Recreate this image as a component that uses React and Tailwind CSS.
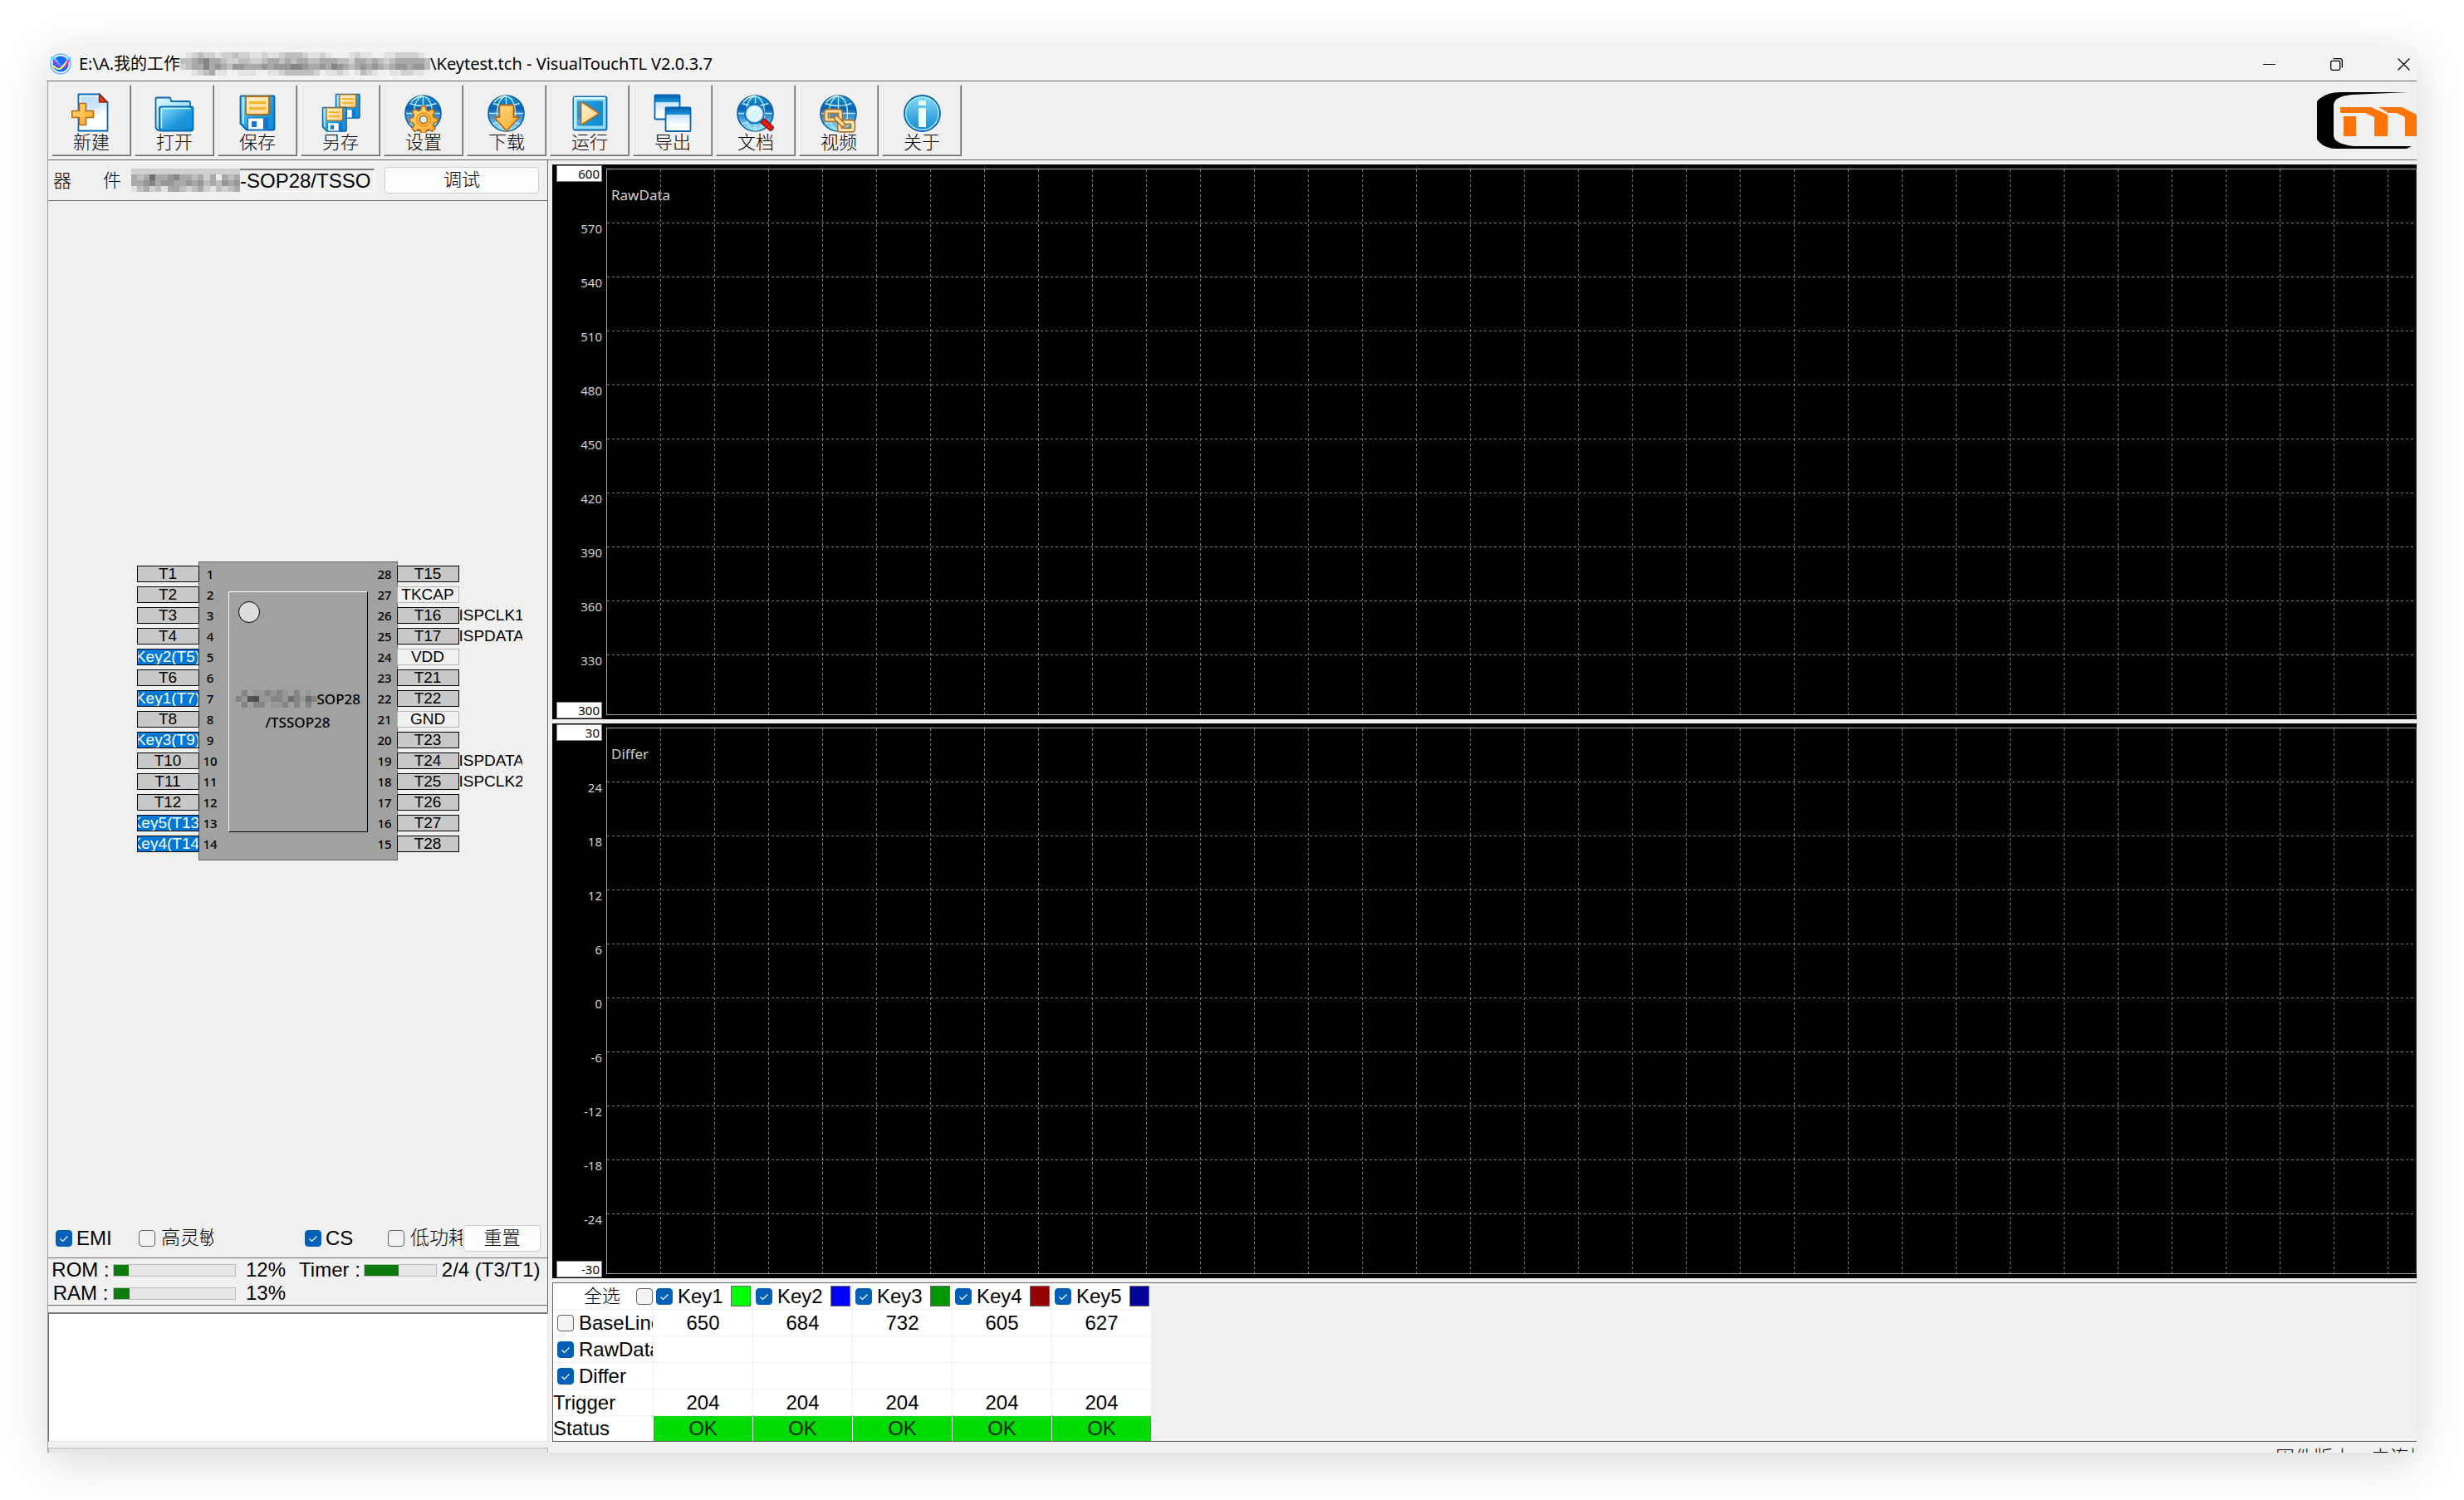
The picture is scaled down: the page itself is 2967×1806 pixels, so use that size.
import React, { useState } from 'react';
import clsx from 'clsx';

const UI_FONT = "font-['Liberation_Sans','Noto_Sans_CJK_SC',sans-serif]";

const SHADES = {
    0: 'bg-[#f0f0f0]',
    1: 'bg-[#e2e2e2]',
    2: 'bg-[#d0d0d0]',
    3: 'bg-[#bebebe]',
    4: 'bg-[#a9a9a9]',
    5: 'bg-[#979797]',
    6: 'bg-[#858585]',
    7: 'bg-[#6e6e6e]',
    8: 'bg-[#505050]',
    9: 'bg-[#a1a1a1]',
};

const PATH_MASK = [
    '0123221223221121123332112100012110011222210',
    '3345644322332234434344334443324434323444443',
    '2344645435544454555665445465434545434554553',
    '0012341100111001123333320112101321001122110',
];
const DEVICE_MASK = [
    '222222222222222222',
    '434744564434240434',
    '445645544545343545',
    '134231443234213234',
];
const CHIP_MASK = ['96955656596959', '65885566576576', '96966955696969'];

const leftPins = ['T1', 'T2', 'T3', 'T4', 'Key2(T5)', 'T6', 'Key1(T7)', 'T8', 'Key3(T9)', 'T10', 'T11', 'T12', 'Key5(T13)', 'Key4(T14)'];
const rightPins = ['T15', 'TKCAP', 'T16', 'T17', 'VDD', 'T21', 'T22', 'GND', 'T23', 'T24', 'T25', 'T26', 'T27', 'T28'];
const ispLabels = ['', '', 'ISPCLK1', 'ISPDATA1', '', '', '', '', '', 'ISPDATA2', 'ISPCLK2', '', '', ''];
const powerPins = ['TKCAP', 'VDD', 'GND'];

const keys = [
    { name: 'Key1', color: 'bg-[#00ff00]', base: 650, trigger: 204 },
    { name: 'Key2', color: 'bg-[#0000ff]', base: 684, trigger: 204 },
    { name: 'Key3', color: 'bg-[#009600]', base: 732, trigger: 204 },
    { name: 'Key4', color: 'bg-[#960000]', base: 605, trigger: 204 },
    { name: 'Key5', color: 'bg-[#000096]', base: 627, trigger: 204 },
];

const Mask = ({ rows, className }) => (
    <div className={clsx('shrink-0', className)} aria-hidden="true">
        {rows.map((row, i) => (
            <div key={i} className="flex">
                {row.split('').map((s, j) => <span key={j} className={clsx('h-[7px] flex-1', SHADES[s])} />)}
            </div>
        ))}
    </div>
);

/* ---------- toolbar icons ---------- */

const IconDefs = () => (
    <svg className="absolute w-0 h-0" aria-hidden="true">
        <defs>
            <linearGradient id="paper" x1="0" y1="0" x2="0.3" y2="1">
                <stop offset="0" stopColor="#b4dcff" /><stop offset="0.45" stopColor="#cfe7ff" /><stop offset="0.75" stopColor="#fff" />
            </linearGradient>
            <linearGradient id="blue" x1="0" y1="0" x2="1" y2="1">
                <stop offset="0" stopColor="#8be0ff" /><stop offset="0.6" stopColor="#1d97da" /><stop offset="1" stopColor="#0e8ad2" />
            </linearGradient>
            <linearGradient id="blueBack" x1="0" y1="0" x2="1" y2="1">
                <stop offset="0" stopColor="#e0fbff" /><stop offset="1" stopColor="#6cc8f0" />
            </linearGradient>
            <linearGradient id="gold" x1="0" y1="0" x2="1" y2="1">
                <stop offset="0" stopColor="#ffe08e" /><stop offset="1" stopColor="#ffa41c" />
            </linearGradient>
            <linearGradient id="cream" x1="0" y1="0" x2="1" y2="1">
                <stop offset="0" stopColor="#fff2cf" /><stop offset="1" stopColor="#ffd48a" />
            </linearGradient>
            <linearGradient id="globe" x1="0" y1="0" x2="0" y2="1">
                <stop offset="0" stopColor="#1f9ade" /><stop offset="0.35" stopColor="#0a62b0" /><stop offset="0.6" stopColor="#3f94d2" /><stop offset="1" stopColor="#a5ecff" />
            </linearGradient>
            <linearGradient id="info" x1="0" y1="0" x2="0" y2="1">
                <stop offset="0" stopColor="#86dcfa" /><stop offset="1" stopColor="#0e88d0" />
            </linearGradient>
            <linearGradient id="win" x1="0" y1="0" x2="0" y2="1">
                <stop offset="0" stopColor="#0562ae" /><stop offset="0.3" stopColor="#1b93d8" /><stop offset="0.31" stopColor="#c4e2fc" /><stop offset="0.75" stopColor="#fff" />
            </linearGradient>
        </defs>
    </svg>
);

const Globe = () => (
    <g>
        <circle cx="23.5" cy="24.5" r="21.5" fill="url(#globe)" stroke="#0460ad" strokeWidth="1.6" />
        <g fill="none" stroke="#b5ecff" strokeWidth="1.4">
            <ellipse cx="23.5" cy="24.5" rx="11" ry="20.5" />
            <path d="M23.5 4v41M3 24.500h41M7.500 12.500q16 6 32 0M7.500 37q16 -6 32 0" />
        </g>
        <path d="M9 11q6-7 14-7.500" fill="none" stroke="#e8fbff" strokeWidth="1.4" />
    </g>
);

const Floppy = () => (
    <g>
        <path d="M5 3.500h38q1.500 0 1.500 1.500v38q0 1.500-1.500 1.500H11L3.500 37V5q0-1.500 1.500-1.500z" fill="url(#blue)" stroke="#0562ae" strokeWidth="1.8" />
        <path d="M5.800 6v30l2 2V6z" fill="#a8ecff" />
        <path d="M10 4h28v19q0 3-3 3H13q-3 0-3-3z" fill="url(#cream)" stroke="#b06a18" strokeWidth="1.8" />
        <path d="M14 11.500h20M14 18.500h20" stroke="#ffb22e" strokeWidth="3" />
        <path d="M12 29.500h25v15H12z" fill="#1076cc" />
        <path d="M13 30.500h18v13H13z" fill="#fff" />
        <path d="M17 34h6v7h-6z" fill="#1076cc" />
    </g>
);

const icons = {
    new: (
        <g>
            <path d="M8.500 1.500H34l9.500 9.500v34.500h-35z" fill="url(#paper)" stroke="#0568b4" strokeWidth="1.8" />
            <path d="M10.500 3.500H33M10.500 3.500v40" stroke="#fff" strokeWidth="1.6" fill="none" />
            <path d="M33.500 1.500v9.500h9.500z" fill="#e03c10" stroke="#a02008" strokeWidth="1.4" />
            <path d="M9.500 12.500h8v9h9v8h-9v9h-8v-9H.8v-8h8.700z" fill="url(#gold)" stroke="#b56a16" strokeWidth="1.7" strokeLinejoin="round" />
        </g>
    ),
    open: (
        <g strokeLinejoin="round">
            <path d="M3 5.500h15.500q1 0 1.500 4.500h21q2 0 2 2v33H5q-3-1-3.500-4V7q0-1.500 1.500-1.500z" fill="url(#blueBack)" stroke="#0568b4" strokeWidth="1.8" />
            <path d="M9 16.500h35q2.500 0 2.500 2.500v24q0 2.500-2.500 2.500H7.500q-1.500-1-1.500-3.500V19q0-2.500 3-2.500z" fill="url(#blue)" stroke="#0568b4" strokeWidth="1.8" />
            <path d="M8.500 42V19.500q0-1 1-1H43" fill="none" stroke="#c5f2ff" strokeWidth="1.4" />
        </g>
    ),
    save: <Floppy />,
    saveAs: (
        <g>
            <g transform="translate(16 -1) scale(.7)"><Floppy /></g>
            <g transform="translate(0 15) scale(.7)"><Floppy /></g>
        </g>
    ),
    settings: (
        <g>
            <Globe />
            <path d="M21.500 16h5l1 4.500 3 1.200 3.800-2.600 3.600 3.600-2.600 3.800 1.200 3 4.500 1v4.500l-4.500 1-1.200 3 2.600 3.800-3.600 3.600-3.800-2.600-3 1.200-1 3.500h-5l-1-3.500-3-1.200-3.800 2.600-3.600-3.600 2.600-3.800-1.200-3-4-1v-4.500l4-1 1.200-3-2.600-3.800 3.600-3.600 3.800 2.600 3-1.200z" fill="url(#gold)" stroke="#b56a16" strokeWidth="1.6" strokeLinejoin="round" />
            <circle cx="24" cy="32" r="8" fill="none" stroke="#f59a1c" strokeWidth="2" />
            <circle cx="24" cy="32" r="4.600" fill="#d9f6ff" stroke="#a86418" strokeWidth="1.500" />
        </g>
    ),
    download: (
        <g>
            <Globe />
            <path d="M17 14.500h14q1.500 0 1.500 1.500v13h6.500L24 46 9 29h6.500V16q0-1.500 1.500-1.500z" fill="url(#gold)" stroke="#b56a16" strokeWidth="1.8" strokeLinejoin="round" />
        </g>
    ),
    run: (
        <g>
            <rect x="4.500" y="4.500" width="40" height="40" rx="2" fill="#8fdcf8" stroke="#0568b4" strokeWidth="1.8" />
            <path d="M6 43V6h37" fill="none" stroke="#e6fbff" strokeWidth="1.8" />
            <rect x="9" y="9.500" width="31" height="30" rx="1" fill="url(#blue)" />
            <rect x="9" y="9.500" width="31" height="22" rx="1" fill="#1288ce" opacity=".75" />
            <path d="M13.500 12.500q0-2 2-1l18.500 12q1.500 1 0 2l-18.500 12q-2 1-2-1z" fill="url(#cream)" stroke="#b56a16" strokeWidth="1.8" />
        </g>
    ),
    export: (
        <g stroke="#0562ae" strokeWidth="1.8">
            <rect x="2.500" y="2.500" width="30" height="29" rx="1" fill="url(#win)" />
            <rect x="15.500" y="17.500" width="30" height="28.500" rx="1" fill="url(#win)" />
        </g>
    ),
    docs: (
        <g>
            <Globe />
            <path d="M30 35.500l4.500-4.500 10.500 9.500q1 3-3.500 5z" fill="#e01c10" stroke="#8e1408" strokeWidth="1.4" />
            <circle cx="22.500" cy="25" r="11.500" fill="#7dd2f4" stroke="#0a62b0" strokeWidth="1.500" />
            <circle cx="22.500" cy="25" r="8.500" fill="#d4f6ff" stroke="#fff" strokeWidth="1.500" />
            <path d="M17.500 25q0-5 5-5.500" fill="none" stroke="#fff" strokeWidth="2" />
        </g>
    ),
    video: (
        <g>
            <Globe />
            <g fill="none" strokeLinejoin="round">
                <rect x="9" y="22" width="17" height="10" rx="1" stroke="#b0702a" strokeWidth="6.500" />
                <rect x="9" y="22" width="17" height="10" rx="1" stroke="#ffdf9c" strokeWidth="3.200" />
                <rect x="25" y="35" width="16" height="9.500" rx="1" stroke="#b0702a" strokeWidth="6.500" />
                <rect x="25" y="35" width="16" height="9.500" rx="1" stroke="#ffe9b8" strokeWidth="3.200" />
                <path d="M21 30l8 8" stroke="#b0702a" strokeWidth="6.500" strokeLinecap="round" />
                <path d="M21 30l8 8" stroke="#ffdf9c" strokeWidth="3.200" strokeLinecap="round" />
            </g>
        </g>
    ),
    about: (
        <g>
            <circle cx="24.500" cy="24.500" r="21.500" fill="url(#info)" stroke="#0562ae" strokeWidth="1.800" />
            <circle cx="24.500" cy="24.500" r="19.800" fill="none" stroke="#a6e8fb" strokeWidth="1.400" />
            <path d="M20 9h9v6h-9zM20 18h9v23h-9z" fill="#e6ffff" />
        </g>
    ),
};

const tools = [
    ['new', '新建'], ['open', '打开'], ['save', '保存'], ['saveAs', '另存'], ['settings', '设置'], ['download', '下载'],
    ['run', '运行'], ['export', '导出'], ['docs', '文档'], ['video', '视频'], ['about', '关于'],
];

const ToolButton = ({ icon, label }) => (
    <button className="w-24 h-[86px] pt-[9px] flex flex-col items-center border border-t-white border-l-white border-r-[#696969] border-b-[#696969] shadow-[inset_-1px_-1px_0_#a0a0a0,inset_1px_1px_0_#e3e3e3]">
        <svg className="w-12 h-12" viewBox="0 0 48 48">{icons[icon]}</svg>
        <span className="text-[22px] leading-6 font-light">{label}</span>
    </button>
);

const TitleBar = () => (
    <header className="h-[41px] shrink-0 flex items-center bg-[#f3f3f3] border-b border-[#696969] pl-[3px] pr-2 font-['Noto_Sans','Noto_Sans_CJK_SC',sans-serif] text-[20px] text-black">
        <svg className="w-[26px] h-[26px] mr-[9px]" viewBox="0 0 26 26">
            <circle cx="13" cy="13" r="12" fill="#e8f4ff" stroke="#7ab4ff" strokeWidth="1.500" />
            <circle cx="13" cy="13" r="9.500" fill="#1668ff" />
            <path d="M1 5l6 3 6 9 5-3 7-9" fill="none" stroke="#30e8ff" strokeWidth="2.500" />
            <path d="M4 15q6 6 10 3l8-10" fill="none" stroke="#f4f060" strokeWidth="2" />
            <path d="M4 8l9 9M18 18l5-10" fill="none" stroke="#e020e8" strokeWidth="2" />
        </svg>
        <span className="whitespace-nowrap">E:\A.我的工作</span>
        <Mask rows={PATH_MASK} className="w-[301px]" />
        <span className="whitespace-nowrap">\Keytest.tch - VisualTouchTL V2.0.3.7</span>
        <div className="ml-auto flex gap-[66px]">
            <button aria-label="Minimize">
                <svg className="w-[15px] h-[15px]" viewBox="0 0 15 15"><path d="M0 7.500h15" stroke="#000" /></svg>
            </button>
            <button aria-label="Restore">
                <svg className="w-[15px] h-[15px]" viewBox="0 0 15 15" fill="none" stroke="#000" strokeWidth="1.300">
                    <rect x=".7" y="3.300" width="11" height="11" rx="1.500" />
                    <path d="M3.500 .7h8q2.800 0 2.800 2.800v8" />
                </svg>
            </button>
            <button aria-label="Close">
                <svg className="w-[15px] h-[15px]" viewBox="0 0 15 15"><path d="M.5 .5l14 14M14.500 .5l-14 14" stroke="#000" strokeWidth="1.300" /></svg>
            </button>
        </div>
    </header>
);

const Toolbar = () => (
    <nav className="h-[95px] shrink-0 flex items-center gap-1 pl-1 border-b border-[#696969] border-l border-l-[#a0a0a0]">
        {tools.map(([icon, label]) => <ToolButton key={icon} icon={icon} label={label} />)}
        <svg className="w-[120px] h-[68px] ml-auto" viewBox="0 0 120 68">
            <path d="M110 0H28Q10 0 0 11v46q8 11 24 11h84l6-3H44Q20 62 20 52V16Q20 5 42 3z" fill="#000" />
            <g fill="#ff7607">
                <path d="M28 18h37l20 9v26H69V30L58 25H28z" />
                <path d="M74 18h28l18 9v26h-14V30l-10-5H86z" />
                <path d="M32 29h15v24H32z" />
            </g>
        </svg>
    </nav>
);

const Check = ({ label, defaultChecked, className, ...rest }) => {
    const [on, setOn] = useState(!!defaultChecked);
    return (
        <label className={clsx('flex items-center overflow-hidden whitespace-nowrap', className)}>
            <span className="grid shrink-0">
                <input
                    type="checkbox"
                    checked={on}
                    onChange={(e) => setOn(e.target.checked)}
                    className="col-start-1 row-start-1 appearance-none w-5 h-5 rounded border border-[#626262] bg-[#f3f3f3] checked:bg-[#005fb8] checked:border-[#005fb8]"
                    {...rest}
                />
                {on && (
                    <svg className="col-start-1 row-start-1 w-5 h-5 pointer-events-none" viewBox="0 0 20 20">
                        <path d="M5.500 10.500l3 3 6-6" fill="none" stroke="#fff" strokeWidth="1.200" />
                    </svg>
                )}
            </span>
            {label && <span>{label}</span>}
        </label>
    );
};

const Meter = ({ value, className }) => (
    <div className={clsx('h-[15px] border border-[#bcbcbc] bg-[#e6e6e6]', className)}>
        <div className="h-full bg-[#0f7b0f]" style={{ width: `${value}%` }} />
    </div>
);

const Pin = ({ name }) => (
    <button
        className={clsx(
            'w-[75px] h-5 border flex items-center justify-center overflow-hidden whitespace-nowrap text-[19px] leading-5',
            name.startsWith('Key') ? 'bg-[#0078d7] border-black text-white'
                : powerPins.includes(name) ? 'bg-[#f0f0f0] border-[#b4b4b4]' : 'bg-[#c8c8c8] border-black'
        )}
    >
        {name}
    </button>
);

const Chip = () => (
    <div className="flex-1 min-h-0 flex items-center justify-center">
        <div className="flex">
            <div className="flex flex-col gap-[5px] pt-[5px] -mr-px z-10">
                {leftPins.map((p) => <Pin key={p} name={p} />)}
            </div>
            <div className="w-60 h-[360px] flex bg-[#a1a1a1] border border-[#696969] font-['Noto_Sans',sans-serif] text-[15px] font-medium">
                <div className="w-[35px] pt-1 pr-2 flex flex-col gap-[5px] text-center leading-5">
                    {leftPins.map((p, i) => <span key={p}>{i + 1}</span>)}
                </div>
                <div className="flex-1 h-[290px] mt-[35px] border border-t-white border-l-white border-r-black border-b-black">
                    <svg className="w-[26px] h-[26px] mt-[11px] ml-[11px]" viewBox="0 0 26 26"><circle cx="13" cy="13" r="12.500" fill="#dcdcdc" stroke="#000" /></svg>
                    <div className="flex items-center mt-[81px] ml-2 h-[21px]">
                        <Mask rows={CHIP_MASK} className="w-[98px]" />
                        <span className="text-[17px]">SOP28</span>
                    </div>
                    <p className="text-center leading-5 mt-2 text-[17px]">/TSSOP28</p>
                </div>
                <div className="w-[35px] pt-1 pl-[6px] flex flex-col gap-[5px] text-center leading-5">
                    {rightPins.map((p, i) => <span key={p}>{28 - i}</span>)}
                </div>
            </div>
            <div className="flex flex-col gap-[5px] pt-[5px] -ml-px z-10">
                {rightPins.map((p) => <Pin key={p} name={p} />)}
            </div>
            <div className="w-[76px] -mr-[76px] flex flex-col gap-[5px] pt-[5px] overflow-hidden whitespace-nowrap text-[19px] leading-5">
                {ispLabels.map((l, i) => <span key={i} className="h-5">{l}</span>)}
            </div>
        </div>
    </div>
);

const SidePanel = () => (
    <aside className="w-[603px] shrink-0 flex flex-col border-l border-[#a0a0a0]">
        <div className="flex-1 min-h-0 flex flex-col border-r border-[#696969]">
            <div className="h-[49px] shrink-0 flex items-center border-b border-[#696969] pl-[6px] pr-[10px]">
                <label htmlFor="device" className="w-[82px] mr-3 flex justify-between text-[22px] font-light"><span>器</span><span>件</span></label>
                <Mask rows={DEVICE_MASK} className="w-[131px]" />
                <input id="device" readOnly value="-SOP28/TSSO" className="w-[162px] h-7 bg-[#f0f0f0] border-t-2 border-t-[#7a7a7a] border-r border-b border-r-white border-b-white" />
                <button className="ml-auto w-[186px] h-8 rounded bg-[#fdfdfd] border border-[#d0d0d0] text-[22px] leading-7 font-light">调试</button>
            </div>
            <Chip />
            <div className="h-[45px] shrink-0 flex items-center border-b border-[#696969] pl-[9px] pb-[3px]">
                <Check label="EMI" defaultChecked className="w-[90px] mr-[10px] gap-[5px]" />
                <Check label="高灵敏度" className="w-[90px] mr-[110px] gap-[7px] text-[23px] font-light" />
                <Check label="CS" defaultChecked className="w-[90px] mr-[10px] gap-[5px]" />
                <Check label="低功耗" className="w-[90px] gap-[7px] text-[23px] font-light" />
                <button className="w-[93px] ml-px h-8 rounded bg-[#fdfdfd] border border-[#d0d0d0] text-[22px] leading-7 font-light">重置</button>
            </div>
            <div className="h-[57px] shrink-0 border-b border-[#696969] leading-7">
                <div className="flex items-center">
                    <span className="w-[78px] text-center">ROM :</span>
                    <Meter value={12} className="w-[148px]" />
                    <span className="ml-3">12%</span>
                    <span className="ml-4">Timer :</span>
                    <Meter value={48} className="w-[88px] ml-1" />
                    <span className="ml-[6px]">2/4 (T3/T1)</span>
                </div>
                <div className="flex items-center">
                    <span className="w-[78px] text-center">RAM :</span>
                    <Meter value={13} className="w-[148px]" />
                    <span className="ml-3">13%</span>
                </div>
            </div>
            <div className="h-2 shrink-0" />
        </div>
        <textarea aria-label="Log" className="h-[156px] shrink-0 resize-none bg-white border border-t-2 border-[#e3e3e3] border-t-[#7a7a7a] border-l-[#696969]" />
        <div className="h-[6px] mt-[7px] shrink-0 bg-[#e6e6e6] border border-b-0 border-[#bcbcbc]" />
    </aside>
);

const Scope = ({ id, name, max, min, ticks }) => (
    <section className="flex-1 min-h-0 flex bg-black font-['Noto_Sans',sans-serif] text-[15px] text-[#d0d0d0]">
        <div className="w-[65px] shrink-0 py-px pl-[5px] pr-[5px] flex flex-col text-right">
            <input aria-label={`${name} max`} defaultValue={max} className="w-[55px] h-5 mb-6 pr-[2px] bg-white border border-[#808080] text-black text-right" />
            {ticks.map((t) => <span key={t} className="h-[65px] leading-[65px]">{t}</span>)}
            <input aria-label={`${name} min`} defaultValue={min} className="w-[55px] h-5 mt-auto pr-[2px] bg-white border border-[#808080] text-black text-right" />
        </div>
        <div className="flex-1 grid mt-[5px] mb-[5px] border border-[#a0a0a0] border-r-[#404040]">
            <svg className="col-start-1 row-start-1 w-full h-full">
                <defs>
                    <pattern id={`${id}-v`} width="65" height="6" patternUnits="userSpaceOnUse"><path d="M64 0h1v3h-1z" fill="#728572" /></pattern>
                    <pattern id={`${id}-h`} width="6" height="65" patternUnits="userSpaceOnUse"><path d="M0 64h3v1h-3z" fill="#728572" /></pattern>
                </defs>
                <rect width="100%" height="100%" fill={`url(#${id}-v)`} />
                <rect width="100%" height="648" fill={`url(#${id}-h)`} />
            </svg>
            <h2 className="col-start-1 row-start-1 pl-[5px] pt-[19px] text-[17px] leading-6">{name}</h2>
        </div>
    </section>
);

const cell = 'p-0 border-b border-r border-[#f0f0f0] font-normal';

const KeyTable = () => (
    <div className="h-48 shrink-0 mt-[5px] border-y border-l border-[#696969]">
        <table className="w-[721px] table-fixed border-separate border-spacing-0 bg-white leading-7 text-center">
            <colgroup>
                <col className="w-[121px]" />
                {keys.map((k) => <col key={k.name} className="w-[120px]" />)}
            </colgroup>
            <thead>
                <tr className="h-8">
                    <th className={cell}>
                        <div className="flex items-center justify-end gap-[19px]">
                            <span className="text-[22px] font-light">全选</span>
                            <Check aria-label="全选" />
                        </div>
                    </th>
                    {keys.map((k) => (
                        <th key={k.name} className={cell}>
                            <div className="h-[31px] flex items-center pl-[3px] border-r-2 border-[#f0f0f0]">
                                <Check label={k.name} defaultChecked className="w-[90px] gap-[6px]" />
                                <span className={clsx('flex-1 h-[25px] border border-[#696969]', k.color)} />
                            </div>
                        </th>
                    ))}
                </tr>
            </thead>
            <tbody>
                <tr className="h-8">
                    <th className={cell}><Check label="BaseLine" className="pl-[5px] gap-[6px]" /></th>
                    {keys.map((k) => <td key={k.name} className={cell}>{k.base}</td>)}
                </tr>
                <tr className="h-8">
                    <th className={cell}><Check label="RawData" defaultChecked className="pl-[5px] gap-[6px]" /></th>
                    {keys.map((k) => <td key={k.name} className={cell} />)}
                </tr>
                <tr className="h-8">
                    <th className={cell}><Check label="Differ" defaultChecked className="pl-[5px] gap-[6px]" /></th>
                    {keys.map((k) => <td key={k.name} className={cell} />)}
                </tr>
                <tr className="h-8">
                    <th className={clsx(cell, 'text-left')}>Trigger</th>
                    {keys.map((k) => <td key={k.name} className={cell}>{k.trigger}</td>)}
                </tr>
                <tr className="h-[30px]">
                    <th className="p-0 font-normal text-left border-r border-[#f0f0f0]">Status</th>
                    {keys.map((k) => <td key={k.name} className="p-0 bg-[#00dc00] text-[#002800] border-r border-[#f0f0f0]">OK</td>)}
                </tr>
            </tbody>
        </table>
    </div>
);

const App = () => (
    <div className="h-screen bg-white p-[57px] overflow-hidden">
        <IconDefs />
        <div className={clsx('h-full flex flex-col overflow-hidden rounded-t-md bg-[#f0f0f0] text-[24px] text-black shadow-[0_10px_55px_rgba(0,0,0,0.16)]', UI_FONT)}>
            <TitleBar />
            <Toolbar />
            <div className="flex-1 min-h-0 flex">
                <SidePanel />
                <main className="flex-1 min-w-0 ml-[5px] pt-[5px] flex flex-col">
                    <div className="flex-1 min-h-0 flex flex-col gap-[5px]">
                        <Scope id="raw" name="RawData" max="600" min="300" ticks={[570, 540, 510, 480, 450, 420, 390, 360, 330]} />
                        <Scope id="diff" name="Differ" max="30" min="-30" ticks={[24, 18, 12, 6, 0, -6, -12, -18, -24]} />
                    </div>
                    <KeyTable />
                    <footer className="h-[13px] shrink-0 flex justify-end overflow-hidden">
                        <p className="w-[170px] pt-[7px] overflow-hidden whitespace-nowrap text-[23px] leading-6 font-light">固件版本：未连接</p>
                    </footer>
                </main>
            </div>
        </div>
    </div>
);

export default App;
